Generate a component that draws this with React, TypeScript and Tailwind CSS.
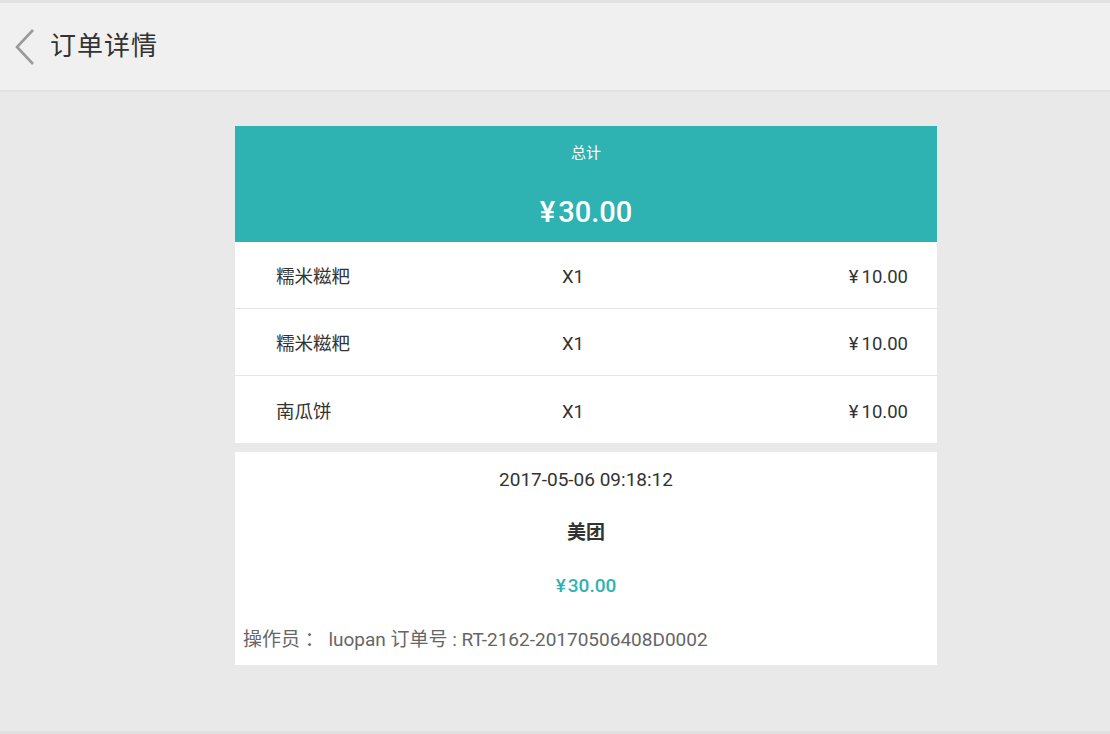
const items = [
  { name: "糯米糍粑", qty: "X1", price: "10.00" },
  { name: "糯米糍粑", qty: "X1", price: "10.00" },
  { name: "南瓜饼", qty: "X1", price: "10.00" },
];

export default function App() {
  return (
    <div
      className="w-[1110px] h-[734px] bg-[#e9e9e9] flex flex-col border-b-[3px] border-[#e0e0e0]"
      style={{ fontFamily: 'Roboto, "Noto Sans CJK SC", sans-serif' }}
    >
      <header className="h-[92px] bg-[#f0f0f0] border-t-[3px] border-[#e2e2e2] border-b-[2px] border-b-[#e3e3e3] flex items-center shrink-0">
        <svg width="22" height="38" viewBox="0 0 22 38" className="ml-[14px]">
          <path d="M19 2 L3 19 L19 36" fill="none" stroke="#9a9a9a" strokeWidth="2.6" />
        </svg>
        <h1 className="ml-[14px] text-[26px] text-[#333] tracking-[1px]">订单详情</h1>
      </header>

      <main className="flex pl-[235px] pt-[34px]">
        <div className="w-[702px] flex flex-col">
          <div className="bg-[#2fb2b2] h-[116px] flex flex-col items-center text-white">
            <div className="mt-[17px] text-[15px] leading-[20px]">总计</div>
            <div className="mt-[33px] text-[29px] leading-[32px] font-medium">
              <span className="mr-[3px]">¥</span>30.00
            </div>
          </div>

          <div className="bg-white flex flex-col">
            {items.map((it, i) => (
              <div
                key={i}
                className={`h-[67px] pt-[6px] grid grid-cols-[1fr_auto_1fr] items-center pl-[41px] pr-[29px] text-[18.5px] text-[#333] ${
                  i < items.length - 1 ? "border-b border-[#e6e6e6]" : ""
                }`}
              >
                <span>{it.name}</span>
                <span className="w-[60px]">{it.qty}</span>
                <span className="text-right">
                  <span className="mr-[3px]">¥</span>
                  {it.price}
                </span>
              </div>
            ))}
          </div>

          <div className="bg-white mt-[9px] h-[213px] flex flex-col items-center text-[19px] text-[#333]">
            <div className="mt-[16px] leading-[24px]">2017-05-06 09:18:12</div>
            <div className="mt-[29px] leading-[24px] font-bold">美团</div>
            <div className="mt-[29px] leading-[24px] text-[#2fb2b2] font-medium">
              <span className="mr-[2px]">¥</span>30.00
            </div>
            <div className="self-start ml-[8px] mt-[30px] leading-[24px] text-[#666]">
              操作员 ： luopan 订单号 : RT-2162-20170506408D0002
            </div>
          </div>
        </div>
      </main>
    </div>
  );
}
